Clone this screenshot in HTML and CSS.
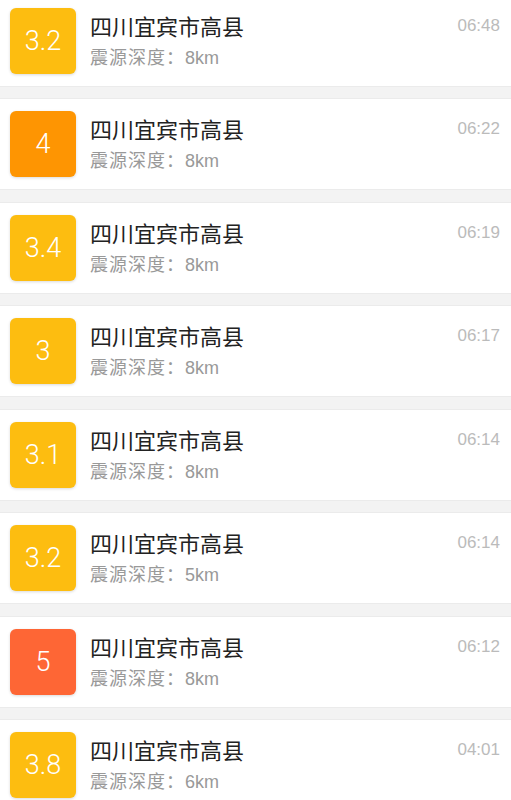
FILE: index.html
```html
<!DOCTYPE html>
<html>
<head>
    <title>地震速报</title>
    <meta charset="UTF-8">
    <meta name="viewport" content="width=device-width, initial-scale=1.0">
    <link rel="stylesheet" href="styles.css">
</head>
<body>
    <div class="list">
        <div class="item">
            <div class="badge yellow">3.2</div>
            <div class="info">
                <div class="title">四川宜宾市高县</div>
                <div class="depth"><span class="label">震源深度：</span>8km</div>
            </div>
            <div class="time">06:48</div>
        </div>
        <div class="item">
            <div class="badge orange">4</div>
            <div class="info">
                <div class="title">四川宜宾市高县</div>
                <div class="depth"><span class="label">震源深度：</span>8km</div>
            </div>
            <div class="time">06:22</div>
        </div>
        <div class="item">
            <div class="badge yellow">3.4</div>
            <div class="info">
                <div class="title">四川宜宾市高县</div>
                <div class="depth"><span class="label">震源深度：</span>8km</div>
            </div>
            <div class="time">06:19</div>
        </div>
        <div class="item">
            <div class="badge yellow">3</div>
            <div class="info">
                <div class="title">四川宜宾市高县</div>
                <div class="depth"><span class="label">震源深度：</span>8km</div>
            </div>
            <div class="time">06:17</div>
        </div>
        <div class="item">
            <div class="badge yellow">3.1</div>
            <div class="info">
                <div class="title">四川宜宾市高县</div>
                <div class="depth"><span class="label">震源深度：</span>8km</div>
            </div>
            <div class="time">06:14</div>
        </div>
        <div class="item">
            <div class="badge yellow">3.2</div>
            <div class="info">
                <div class="title">四川宜宾市高县</div>
                <div class="depth"><span class="label">震源深度：</span>5km</div>
            </div>
            <div class="time">06:14</div>
        </div>
        <div class="item">
            <div class="badge red">5</div>
            <div class="info">
                <div class="title">四川宜宾市高县</div>
                <div class="depth"><span class="label">震源深度：</span>8km</div>
            </div>
            <div class="time">06:12</div>
        </div>
        <div class="item">
            <div class="badge yellow">3.8</div>
            <div class="info">
                <div class="title">四川宜宾市高县</div>
                <div class="depth"><span class="label">震源深度：</span>6km</div>
            </div>
            <div class="time">04:01</div>
        </div>
    </div>
</body>
</html>
```
FILE: styles.css
```css
body {
    margin: 0;
    background: #f3f3f3;
    font-family: "Liberation Sans", "Noto Sans CJK SC", sans-serif;
    overflow: hidden;
}
.list {
    display: flex;
    flex-direction: column;
    gap: 11.45px;
    margin-top: -5px;
}
.item {
    display: flex;
    align-items: flex-start;
    height: 92px;
    padding: 13px 11px 0 10px;
    box-sizing: border-box;
    background: white;
    border-top: 1px solid #ebebeb;
    border-bottom: 1px solid #ebebeb;
}
.badge {
    width: 66px;
    height: 66px;
    flex-shrink: 0;
    margin-top: -1px;
    border-radius: 6px;
    display: flex;
    align-items: center;
    justify-content: center;
    color: white;
    font-family: Roboto, "Liberation Sans", sans-serif;
    font-weight: 300;
    font-size: 27px;
    box-shadow: 0 1px 3px rgba(0, 0, 0, 0.15);
}
.yellow {
    background: #fdbd10;
}
.orange {
    background: #fe9502;
}
.red {
    background: #fe6635;
}
.info {
    flex: 1;
    margin-left: 14px;
    padding-top: 4px;
}
.title {
    font-size: 22px;
    line-height: 30px;
    color: #222;
}
.depth {
    margin-top: 2px;
    font-size: 18px;
    line-height: 26px;
    color: #999;
}
.label {
    letter-spacing: 1px;
}
.time {
    margin-top: 7px;
    font-size: 17px;
    line-height: 20px;
    color: #bbb;
}
```
